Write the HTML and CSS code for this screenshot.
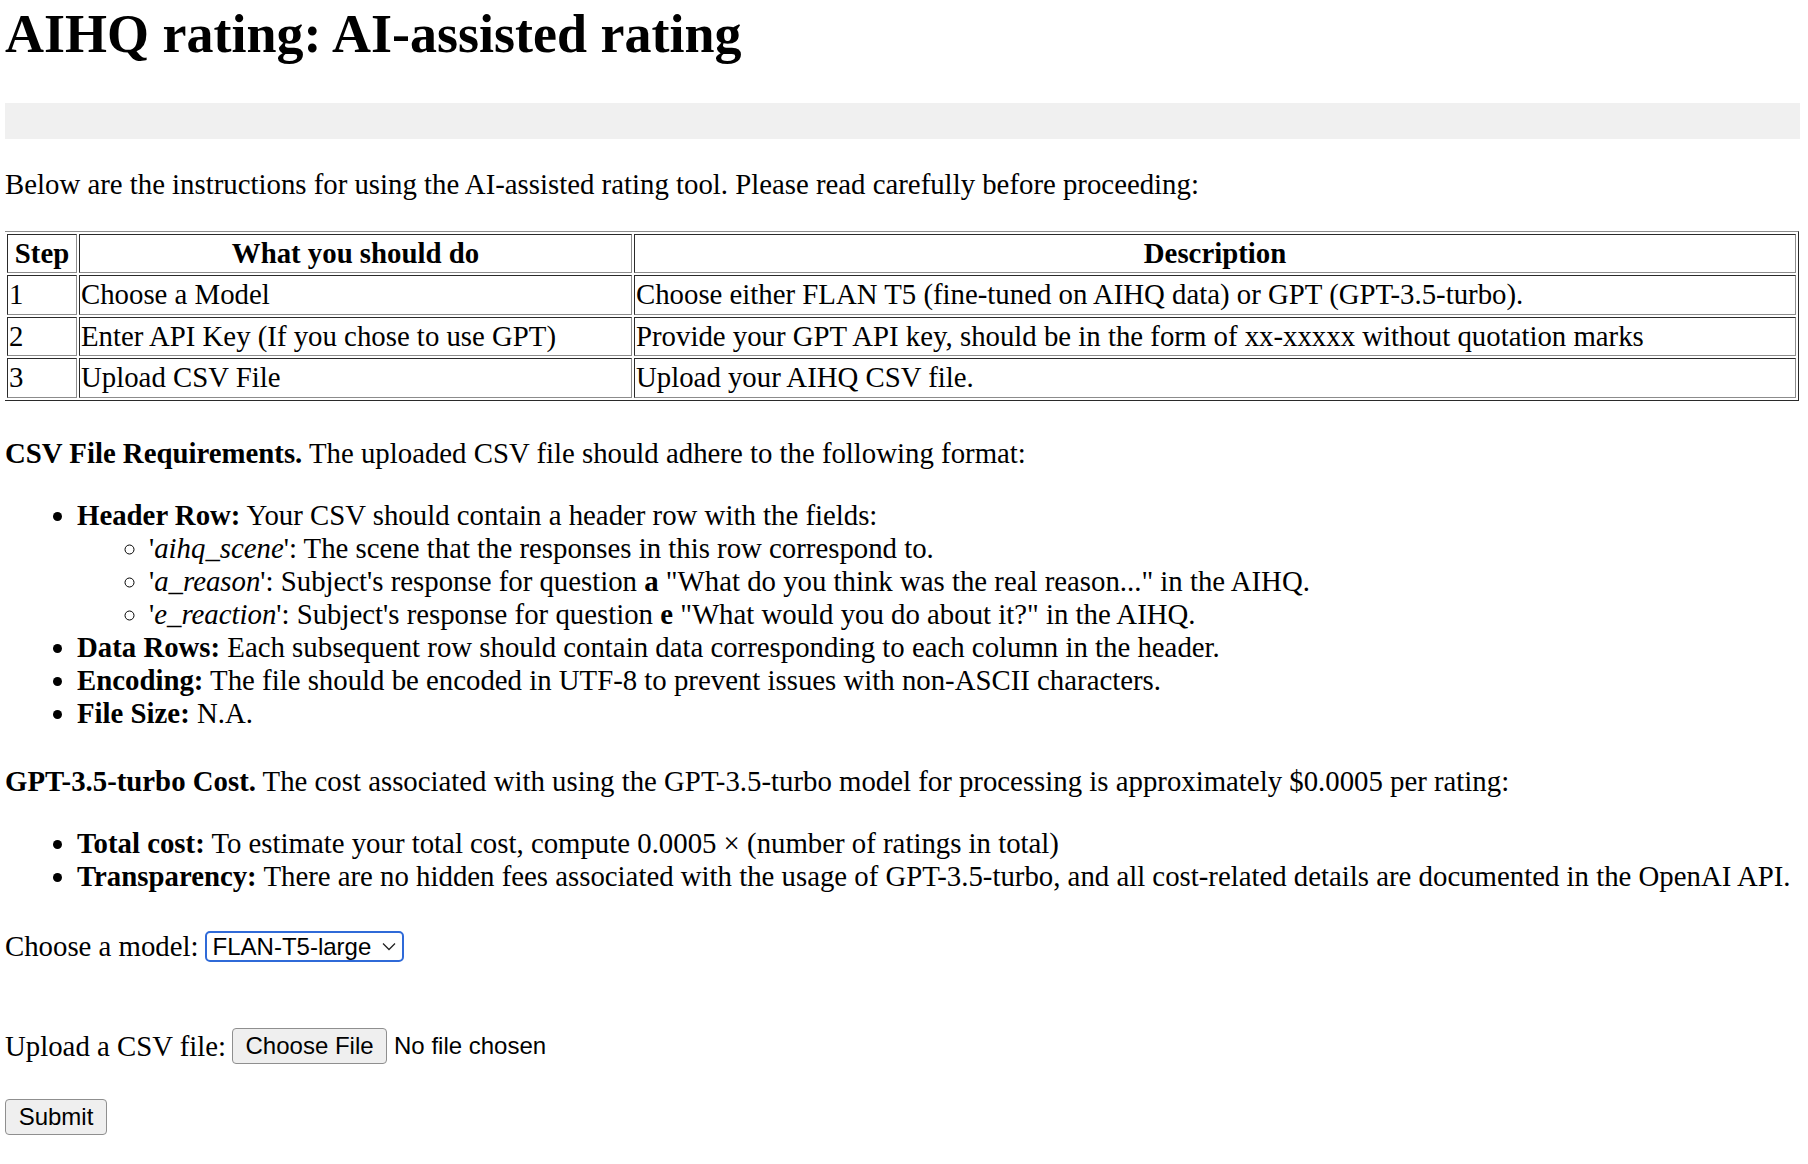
FILE: index.html
```html
<!DOCTYPE html>
<html lang="en">
<head>
<meta charset="utf-8">
<title>AIHQ rating: AI-assisted rating</title>
<link rel="stylesheet" href="styles.css">
</head>
<body>
<h1 class="title">AIHQ rating: AI-assisted rating</h1>
<div class="notice"></div>
<p class="intro">Below are the instructions for using the AI-assisted rating tool. Please read carefully before proceeding:</p>
<table class="steps">
  <colgroup>
    <col class="c-step">
    <col class="c-what">
    <col class="c-desc">
  </colgroup>
  <thead>
    <tr><th>Step</th><th>What you should do</th><th>Description</th></tr>
  </thead>
  <tbody>
    <tr><td>1</td><td>Choose a Model</td><td>Choose either FLAN T5 (fine-tuned on AIHQ data) or GPT (GPT-3.5-turbo).</td></tr>
    <tr><td>2</td><td>Enter API Key (If you chose to use GPT)</td><td>Provide your GPT API key, should be in the form of xx-xxxxx without quotation marks</td></tr>
    <tr><td>3</td><td>Upload CSV File</td><td>Upload your AIHQ CSV file.</td></tr>
  </tbody>
</table>
<p class="section req"><b>CSV File Requirements.</b> The uploaded CSV file should adhere to the following format:</p>
<ul class="list">
  <li><b>Header Row:</b> Your CSV should contain a header row with the fields:
    <ul class="sublist">
      <li>'<i>aihq_scene</i>': The scene that the responses in this row correspond to.</li>
      <li>'<i>a_reason</i>': Subject's response for question <b>a</b> "What do you think was the real reason..." in the AIHQ.</li>
      <li>'<i>e_reaction</i>': Subject's response for question <b>e</b> "What would you do about it?" in the AIHQ.</li>
    </ul>
  </li>
  <li><b>Data Rows:</b> Each subsequent row should contain data corresponding to each column in the header.</li>
  <li><b>Encoding:</b> The file should be encoded in UTF-8 to prevent issues with non-ASCII characters.</li>
  <li><b>File Size:</b> N.A.</li>
</ul>
<p class="section cost"><b>GPT-3.5-turbo Cost.</b> The cost associated with using the GPT-3.5-turbo model for processing is approximately $0.0005 per rating:</p>
<ul class="list">
  <li><b>Total cost:</b> To estimate your total cost, compute 0.0005 × (number of ratings in total)</li>
  <li><b>Transparency:</b> There are no hidden fees associated with the usage of GPT-3.5-turbo, and all cost-related details are documented in the OpenAI API.</li>
</ul>
<form class="form">
  <div class="field model-field">
    <label for="model">Choose a model:</label>
    <span class="select-wrap">
      <select id="model" class="select">
        <option>FLAN-T5-large</option>
        <option>GPT-3.5-turbo</option>
      </select>
      <svg class="chevron" width="14" height="9" viewBox="0 0 14 9"><path d="M1 1.5 L7 7.5 L13 1.5" fill="none" stroke="#222" stroke-width="1.3"/></svg>
    </span>
  </div>
  <div class="field upload-field">
    <label for="file">Upload a CSV file:</label>
    <input id="file" class="file" type="file" accept=".csv">
  </div>
  <div class="field submit-field">
    <button type="submit" class="btn">Submit</button>
  </div>
</form>
</body>
</html>
```

FILE: styles.css
```css
html, body {
  background: #ffffff;
}

body {
  margin: 0 8px 0 5px;
  font-family: "Liberation Serif", "Times New Roman", serif;
  font-size: 28.8px;
  line-height: 33px;
  color: #000000;
}

.title {
  font-size: 54px;
  line-height: 64px;
  font-weight: bold;
  margin: 2px 0 37px 0;
}

.notice {
  height: 36px;
  background: #f0f0f0;
  margin-left: -2px;
}

.intro {
  margin: 29px 0 29.5px 0;
}

.steps {
  width: 100%;
  table-layout: fixed;
  border-collapse: separate;
  border-spacing: 2px;
  border-width: 1px;
  border-style: solid;
  border-color: #8c8c8c #2a2a2a #2a2a2a #8c8c8c;
  margin-left: -1px;
}

.c-step { width: 70px; }
.c-what { width: 553px; }

.steps th,
.steps td {
  border-width: 1px;
  border-style: solid;
  border-color: #2a2a2a #8c8c8c #8c8c8c #2a2a2a;
  padding: 1px;
  line-height: 35.5px;
  white-space: nowrap;
  overflow: hidden;
}

.steps th {
  font-weight: bold;
  text-align: center;
}

.steps td {
  text-align: left;
}

.section {
  margin: 0;
}

.req {
  margin-top: 36px;
}

.cost {
  margin-top: 35px;
}

.list {
  margin: 29px 0;
  padding-left: 72px;
  list-style: disc;
}

.sublist {
  margin: 0;
  padding-left: 72px;
  list-style: circle;
}

.list li {
  white-space: nowrap;
}

.form {
  margin: 0;
}

.field {
  display: flex;
  align-items: center;
}

.model-field {
  margin-top: 37px;
  height: 33px;
}

.upload-field {
  margin-top: 66px;
  height: 35px;
}

.submit-field {
  margin-top: 35px;
}

.field label {
  margin-right: 6px;
}

.select-wrap {
  display: inline-flex;
  align-items: center;
  box-sizing: border-box;
  width: 199px;
  height: 31px;
  border: 2px solid #2f6ad8;
  border-radius: 5px;
  background: #ffffff;
  padding: 0 6px 0 6px;
}

.select {
  appearance: none;
  -webkit-appearance: none;
  border: none;
  outline: none;
  background: transparent;
  font-family: "Liberation Sans", Arial, sans-serif;
  font-size: 24px;
  color: #000000;
  padding: 0;
  margin: 0;
  flex: 1;
  min-width: 0;
  height: 27px;
  line-height: 27px;
}

.chevron {
  flex: none;
  margin-left: 2px;
  margin-top: 1px;
}

.file {
  font-family: "Liberation Sans", Arial, sans-serif;
  font-size: 24px;
  color: #000000;
}

.file::file-selector-button {
  font-family: "Liberation Sans", Arial, sans-serif;
  font-size: 24px;
  color: #000000;
  background: #efefef;
  border: 1px solid #8f8f8f;
  border-radius: 4px;
  height: 36px;
  width: 155px;
  padding: 0;
  margin: 0 7px 0 0;
}

.btn {
  font-family: "Liberation Sans", Arial, sans-serif;
  font-size: 24px;
  color: #000000;
  background: #efefef;
  border: 1px solid #8f8f8f;
  border-radius: 4px;
  height: 36px;
  width: 102px;
  padding: 0;
  margin: 0;
}
```
